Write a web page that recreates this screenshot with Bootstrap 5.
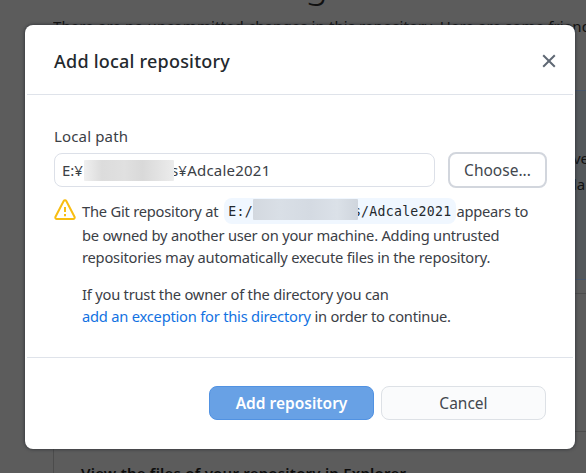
<!DOCTYPE html>
<html lang="en">
<head>
<meta charset="utf-8">
<title>Add local repository</title>
<meta name="viewport" content="width=device-width, initial-scale=1">
<link href="https://cdn.jsdelivr.net/npm/bootstrap@5.3.0/dist/css/bootstrap.min.css" rel="stylesheet">
<style>
html, body { height: 100%; overflow: hidden; }
body { font-family: "Noto Sans", "Open Sans", sans-serif; font-size: 15px; line-height: 22px; color: #3b4046; background: #5c5c5c; }
.behind { left: 53px; top: 0; width: 533px; height: 473px; overflow: hidden; color: #111; white-space: nowrap; }
.behind-title { font-size: 38px; line-height: 40px; margin-top: -38px; height: 40px; padding-left: 20px; font-weight: 300; }
.behind-lead { margin: 13px 0 0; height: 22px; letter-spacing: .1px; }
.behind-tip { width: 620px; margin-top: 53px; height: 190px; background: #54585b; border: 1px solid #48566a; padding-top: 56px; }
.behind-tip p { margin: 0 0 4px; padding-left: 519px; }
.behind-group { width: 620px; margin-top: 13px; height: 240px; border: 1px solid #4c4c4c; }
.behind-row { height: 138px; border-bottom: 1px solid #4c4c4c; }
.behind-name { font-weight: 600; padding: 30px 0 0 27px; letter-spacing: .22px; color: #0c0c0c; }
.dialog-box { margin: 25px 0 0 25px; width: 550px; height: 424px; border-radius: 8px; background: #fff; box-shadow: 0 0 3px 1px rgba(40,44,50,.6); }
.dialog-head { height: 70px; padding: 3px 17px 0 27px; border-bottom: 1px solid #dfe3ea; margin: 0 2px; }
.dialog-head h1 { font-size: 18px; line-height: 24px; font-weight: 500; color: #24292e; margin: 0; letter-spacing: .22px; }
.dialog-main { height: 262px; padding: 30px 28px 0 29px; }
.dialog-foot { height: 92px; border-top: 1px solid #dfe3ea; margin: 0 2px; padding: 0 27px 1px; gap: 7px; }
.path-label { height: 27px; letter-spacing: .15px; }
.path-box { width: 381px; height: 34px; border: 1px solid #dce0e8; border-radius: 8px; padding-left: 7px; white-space: nowrap; }
.path-tail { letter-spacing: .22px; }
.act { --bs-btn-border-radius: 8px; --bs-btn-padding-x: 0; --bs-btn-font-size: 15.5px; height: 34px; padding: 1px 0 0; color: #42474e; --bs-btn-border-color: #dde1e6; background: #fafbfc; }
.act-choose { width: 99px; height: 36px; border: 2px solid #d2d6dd; background: #fff; }
.act-cancel { width: 165px; }
.act-add { width: 165px; background: #68a1e5; border-color: #5192e2; color: #fff; font-weight: 600; }
.smudge { display: inline-block; flex: none; border-radius: 1px; z-index: 1; }
.smudge-path { width: 90px; height: 21px; margin: 0 -3px 0 1px; background: linear-gradient(90deg, #f0f0f0, #dcdcdc 20%, #e0e0e0 45%, #d9d9d9 65%, #ececec); }
.smudge-code { width: 105px; height: 21px; margin-right: -5px; margin-top: -4px; background: linear-gradient(90deg, #d3d8df, #d9dfe6 25%, #d4dae2 55%, #dbe1e8 80%, #cfd5dd); }
.repo-code { font: 13.2px/24px "DejaVu Sans Mono", monospace; color: #24292e; background: #f0f7ff; border-radius: 8px; height: 26px; padding: 1px 5px 0 4px; letter-spacing: .27px; margin-left: 6px; }
.warn { margin-top: 11px; white-space: nowrap; font-size: 14.7px; letter-spacing: -.22px; }
.warn-icon { width: 22px; height: 22px; margin: 0 6px 0 0; }
.warn-copy { margin-top: -1px; }
.warn-second { margin-top: 15px; }
.go { color: #1272e2; text-decoration: none; }
</style>
<script src="https://cdn.jsdelivr.net/npm/bootstrap@5.3.0/dist/js/bootstrap.bundle.min.js"></script>
</head>
<body>
<div class="behind position-absolute">
  <div class="behind-title">No local changes</div>
  <p class="behind-lead">There are no uncommitted changes in this repository. Here are some friendly</p>
  <div class="behind-tip"><p>ve</p><p>la</p></div>
  <div class="behind-group">
    <div class="behind-row"></div>
    <div class="behind-name">View the files of your repository in Explorer</div>
  </div>
</div>
<div class="d-flex">
  <section class="dialog-box position-relative" role="dialog">
    <header class="dialog-head d-flex align-items-center justify-content-between">
      <h1>Add local repository</h1>
      <svg width="14" height="14" viewBox="0 0 14 14" aria-label="Close"><path d="M1.2 1.2 12.8 12.8M12.8 1.2 1.2 12.8" stroke="#5f6874" stroke-width="2" fill="none"/></svg>
    </header>
    <div class="dialog-main">
      <label class="path-label d-block">Local path</label>
      <div class="d-flex align-items-center justify-content-between">
        <div class="path-box d-flex align-items-center"><span>E:¥</span><span class="smudge smudge-path"></span><span class="path-tail">s¥Adcale2021</span></div>
        <button class="btn act act-choose">Choose...</button>
      </div>
      <div class="warn d-flex">
        <svg class="warn-icon flex-shrink-0" viewBox="0 0 22 22"><path d="M9.7 2.1a1.5 1.5 0 0 1 2.6 0l8.2 15.6a1.5 1.5 0 0 1-1.3 2.2H2.8a1.5 1.5 0 0 1-1.3-2.2z" fill="none" stroke="#f8bd12" stroke-width="2"/><path d="M11 8v5M11 15v2.2" stroke="#f8bd12" stroke-width="2"/></svg>
        <div class="warn-copy">
          <div class="d-flex align-items-center"><span>The Git repository at</span><span class="repo-code d-flex align-items-center">E:/<span class="smudge smudge-code"></span>s/Adcale2021</span><span>appears to</span></div>
          <div>be owned by another user on your machine. Adding untrusted</div>
          <div>repositories may automatically execute files in the repository.</div>
          <div class="warn-second">If you trust the owner of the directory you can</div>
          <div><a class="go" href="#">add an exception for this directory</a> in order to continue.</div>
        </div>
      </div>
    </div>
    <footer class="dialog-foot d-flex align-items-center justify-content-end">
      <button class="btn act act-add">Add repository</button>
      <button class="btn act act-cancel">Cancel</button>
    </footer>
  </section>
</div>
</body>
</html>
